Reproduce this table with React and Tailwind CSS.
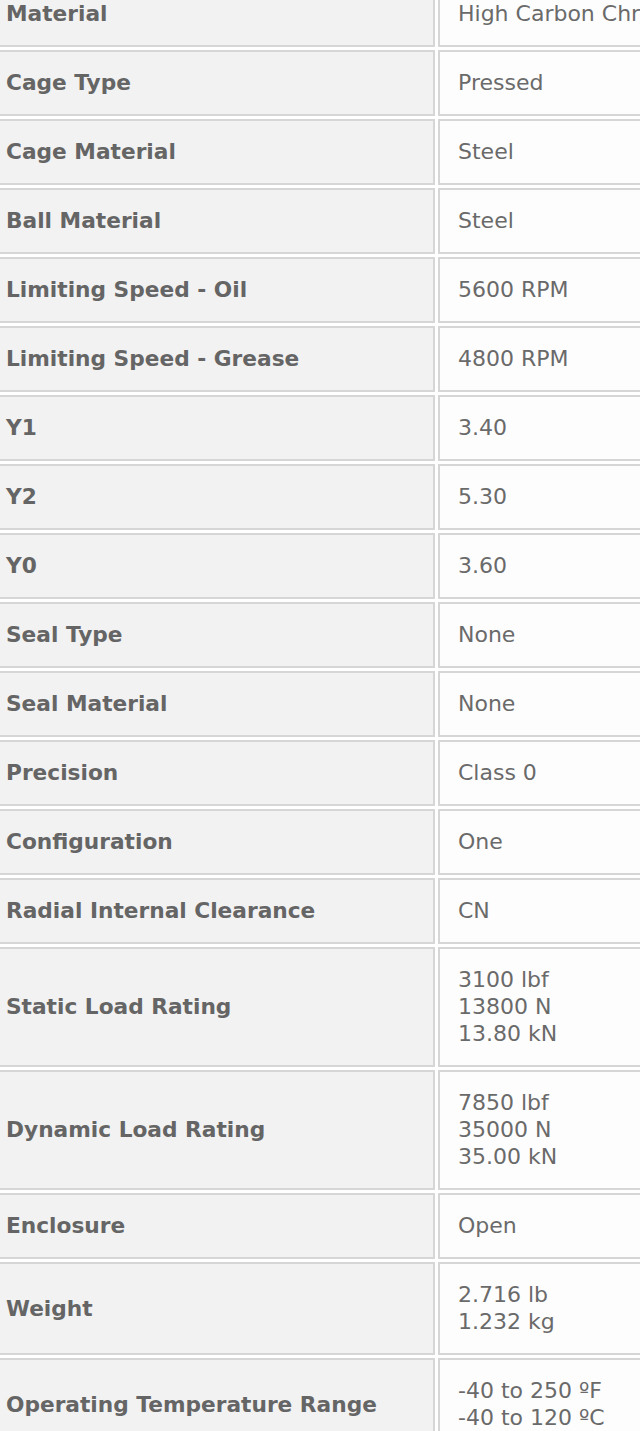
const rows = [
  ["Material", ["High Carbon Chrome Steel"]],
  ["Cage Type", ["Pressed"]],
  ["Cage Material", ["Steel"]],
  ["Ball Material", ["Steel"]],
  ["Limiting Speed - Oil", ["5600 RPM"]],
  ["Limiting Speed - Grease", ["4800 RPM"]],
  ["Y1", ["3.40"]],
  ["Y2", ["5.30"]],
  ["Y0", ["3.60"]],
  ["Seal Type", ["None"]],
  ["Seal Material", ["None"]],
  ["Precision", ["Class 0"]],
  ["Configuration", ["One"]],
  ["Radial Internal Clearance", ["CN"]],
  ["Static Load Rating", ["3100 lbf", "13800 N", "13.80 kN"]],
  ["Dynamic Load Rating", ["7850 lbf", "35000 N", "35.00 kN"]],
  ["Enclosure", ["Open"]],
  ["Weight", ["2.716 lb", "1.232 kg"]],
  ["Operating Temperature Range", ["-40 to 250 ºF", "-40 to 120 ºC"]],
];

function App() {
  return (
    <div className="w-[640px] h-[1431px] overflow-hidden bg-white font-['DejaVu_Sans',sans-serif]">
      <div className="grid grid-cols-[449px_320px] gap-[3px] -ml-[14px] -mt-[19px]">
        {rows.map(([label, values]) => (
          <div key={label} className="contents">
            <div className="flex items-center border-2 border-[#d6d6d6] bg-[#f2f2f2] px-[18px] pt-[17px] pb-[18px] text-[21.7px] leading-[27px] font-bold text-[#656565]">
              {label}
            </div>
            <div className="flex flex-col justify-center border-2 border-[#d6d6d6] bg-[#fdfdfd] px-[18px] pt-[17px] pb-[18px] text-[22px] leading-[27px] text-[#6a6a6a] whitespace-nowrap">
              {values.map(v => (
                <div key={v}>{v}</div>
              ))}
            </div>
          </div>
        ))}
      </div>
    </div>
  )
}

export default App
